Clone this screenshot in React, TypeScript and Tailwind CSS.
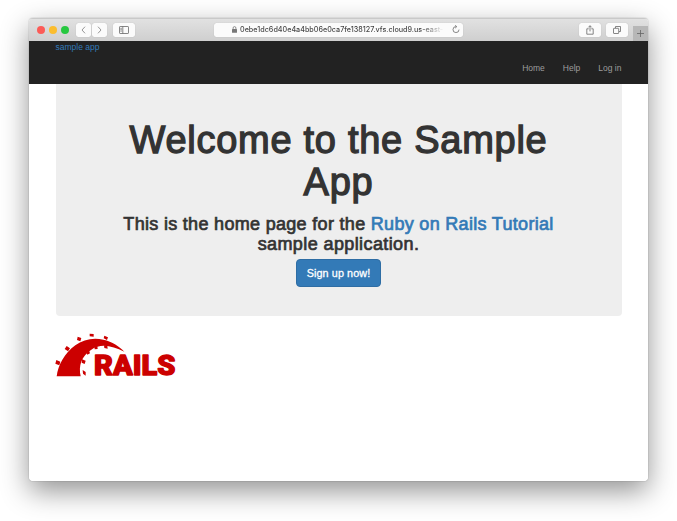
import React from "react";

const toolButton =
  "flex h-[14px] items-center justify-center rounded-[2.5px] bg-[#fbfbfb] shadow-[0_0_1px_rgba(0,0,0,0.22)]";

function TitleBar() {
  return (
    <div className="flex h-[23px] shrink-0 items-center bg-gradient-to-b from-[#e2e2e2] to-[#cfcfcf] shadow-[inset_0_1px_0_#c9c9c9]">
      <div className="ml-[7.5px] flex gap-[4px]">
        <span className="size-[8px] rounded-full bg-[#fc5b57]" />
        <span className="size-[8px] rounded-full bg-[#fbbd2e]" />
        <span className="size-[8px] rounded-full bg-[#27c840]" />
      </div>
      <div className="ml-[7px] flex gap-px">
        <div className={`${toolButton} w-[15px]`}>
          <svg width="5" height="8" viewBox="0 0 5 8" fill="none" stroke="#8b8b8b" strokeWidth="0.9">
            <path d="M4 .7 1 4l3 3.3" />
          </svg>
        </div>
        <div className={`${toolButton} w-[15px]`}>
          <svg width="5" height="8" viewBox="0 0 5 8" fill="none" stroke="#8b8b8b" strokeWidth="0.9">
            <path d="M1 .7 4 4 1 7.3" />
          </svg>
        </div>
      </div>
      <div className={`${toolButton} ml-[6px] w-[22px]`}>
        <svg width="10" height="8" viewBox="0 0 10 8" fill="none" stroke="#686868" strokeWidth="0.8">
          <rect x=".5" y=".5" width="9" height="7" rx=".6" />
          <path d="M3.8.5v7M1.4 2.3h1.4M1.4 3.7h1.4M1.4 5.1h1.4" />
        </svg>
      </div>
      <div className="ml-[79px] flex h-[14px] w-[249px] items-center rounded-[2.5px] bg-[#fbfbfb] shadow-[0_0_1px_rgba(0,0,0,0.22)]">
        <svg className="ml-[18.5px] shrink-0" width="5" height="7" viewBox="0 0 5 7">
          <path d="M1.1 3.2V2a1.4 1.4 0 0 1 2.8 0v1.2" fill="none" stroke="#777" strokeWidth=".8" />
          <rect y="3" width="5" height="3.7" rx=".5" fill="#777" />
        </svg>
        <div className="ml-[3px] w-[206px] overflow-hidden whitespace-nowrap bg-gradient-to-r from-[#404040] from-[88%] to-transparent to-[99%] bg-clip-text font-['Inter',sans-serif] text-[7.2px] font-medium leading-[12px] text-transparent">
          0ebe1dc6d40e4a4bb06e0ca7fe138127.vfs.cloud9.us-east-
        </div>
        <svg className="ml-[5.5px] shrink-0" width="8" height="9" viewBox="0 0 8 9" fill="none" stroke="#6b6b6b" strokeWidth=".8">
          <path d="M4.2 1.6A3 3 0 1 0 7 4.6M3.2.2l1.6 1.5L3.2 3.1" />
        </svg>
      </div>
      <div className={`${toolButton} ml-[116.5px] w-[22px]`}>
        <svg width="8" height="10" viewBox="0 0 8 10" fill="none" stroke="#686868" strokeWidth=".8">
          <path d="M2.7 3.8H.8v5.4h6.4V3.8H5.3M4 6.4V.8M2.3 2.4 4 .7l1.7 1.7" />
        </svg>
      </div>
      <div className={`${toolButton} ml-[5px] w-[22px]`}>
        <svg width="8" height="8" viewBox="0 0 8 8" fill="none" stroke="#686868" strokeWidth=".8">
          <rect x=".5" y="2.3" width="5.2" height="5.2" rx=".5" />
          <path d="M2.5 2.1V.5h5v5H6" />
        </svg>
      </div>
      <div className="ml-auto flex h-[15px] w-[15px] items-center justify-center self-end bg-[#b7b7b7]">
        <svg width="7" height="7" viewBox="0 0 7 7" stroke="#666" strokeWidth=".8">
          <path d="M3.5 0v7M0 3.5h7" />
        </svg>
      </div>
    </div>
  );
}

function RailsLogo() {
  return (
    <svg className="ml-[26px] mt-[17px] block overflow-visible" width="121" height="44" viewBox="33 24 363 132" fill="#cc0000">
      <path d="M38 154C42 120 62 84 94 61C118 43 148 37 178 44C205 50 226 64 241 80C205 63 171 54 142 74C112 94 103 121 110 154Z" />
      <path d="m37 105 12 5-3 11-12-5zM68 63l10 7-6 9-10-7zM101 35l11 4-3 10-10-4zM137 26l12 1v8l-12-1zM181 32l11 5-3 8-10-5zM180 61l10 2 1 8-10-2zM151 64l9-1 1 9-9 1zM126 80l9-4 3 9-8 4zM114 103l11 4-3 10-9-4zM116 135l9 6v11l-8-6z" />
      <text
        x="150"
        y="151"
        textLength="244"
        lengthAdjust="spacingAndGlyphs"
        stroke="#cc0000"
        strokeWidth="4"
        strokeLinejoin="round"
        className="font-['Roboto',sans-serif] text-[85px] font-black"
      >
        RAILS
      </text>
    </svg>
  );
}

export default function App() {
  return (
    <div className="h-[521px] w-[677px] overflow-hidden bg-white pl-[29px] pt-[18px] font-['Liberation_Sans',Arial,sans-serif]">
      <div className="h-[463px] w-[619px] rounded-[4px] shadow-[0_0_1px_rgba(0,0,0,0.6),0_10px_28px_rgba(0,0,0,0.43)]">
        <div className="flex h-full flex-col overflow-hidden rounded-[4px] bg-white">
          <TitleBar />
          <header className="flex h-[43px] shrink-0 justify-between bg-[#222] pl-[26.5px] pr-[26.5px] text-[8.5px] leading-[12px]">
            <a className="text-[#337ab7]">sample app</a>
            <nav className="flex gap-[18px] pt-[21px] text-[#9d9d9d]">
              <a>Home</a>
              <a>Help</a>
              <a>Log in</a>
            </nav>
          </header>
          <main>
            <section className="ml-[26.5px] flex h-[232px] w-[566px] flex-col items-center rounded-b-[4px] bg-[#eee] pt-[35px] text-center text-[#333]">
              <h1 className="whitespace-nowrap text-[38px] leading-[42px] tracking-[0.72px] [-webkit-text-stroke:1.3px_#333]">
                Welcome to the Sample
                <br />
                App
              </h1>
              <h2 className="mt-[11px] whitespace-nowrap text-[18px] leading-[20px] tracking-[0.31px] [-webkit-text-stroke:0.7px_#333]">
                This is the home page for the{" "}
                <a className="text-[#337ab7] [-webkit-text-stroke:0.7px_#337ab7]">Ruby on Rails Tutorial</a>
                <br />
                <span className="tracking-[0.4px]">sample application.</span>
              </h2>
              <button className="mt-[5px] h-[28px] w-[85px] rounded-[4px] border border-[#2e6da4] bg-[#337ab7] text-[10.8px] tracking-[0.1px] text-white [-webkit-text-stroke:0.3px_white]">
                Sign up now!
              </button>
            </section>
            <RailsLogo />
          </main>
        </div>
      </div>
    </div>
  );
}
